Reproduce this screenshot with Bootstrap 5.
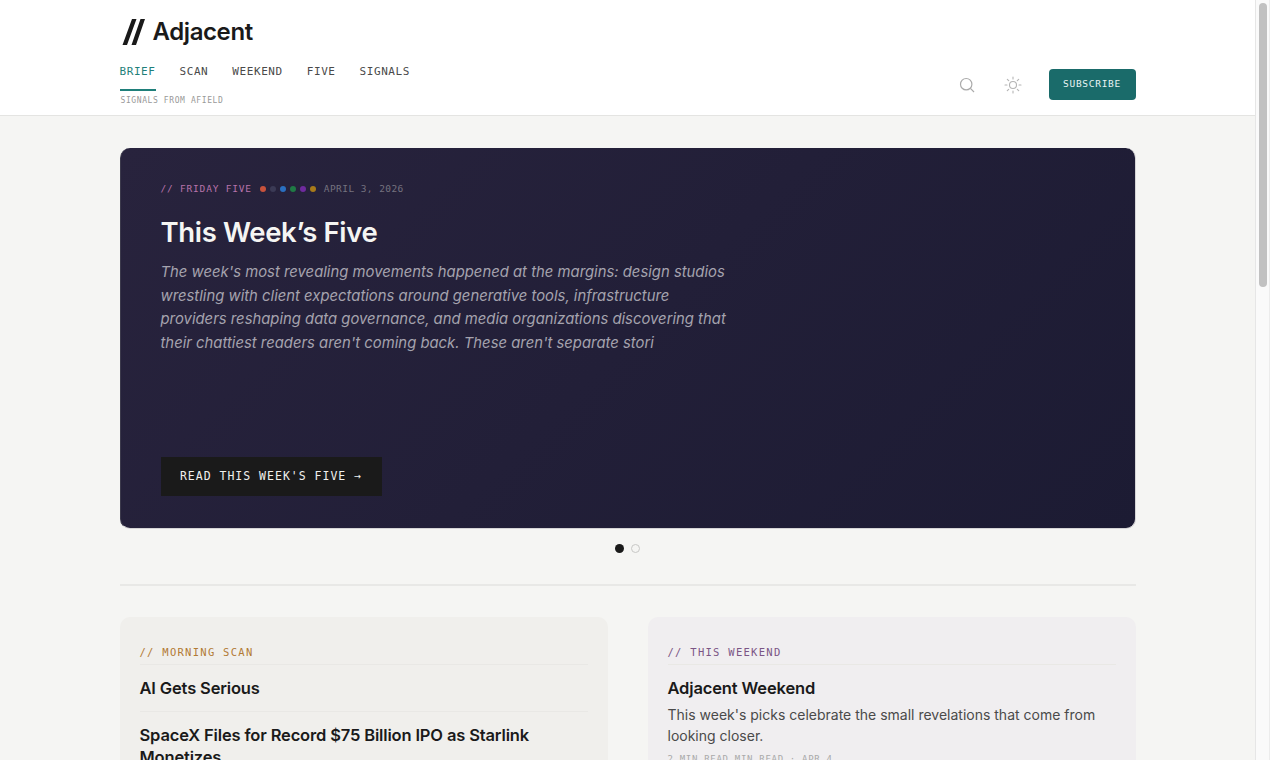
<!DOCTYPE html>
<html lang="en">
<head>
  <meta charset="UTF-8" />
  <meta name="viewport" content="width=device-width, initial-scale=1.0"/>
  <title>Adjacent</title>
  <link href="https://cdn.jsdelivr.net/npm/bootstrap@5.3.2/dist/css/bootstrap.min.css" rel="stylesheet">
  <style>
    body { background: #f5f5f3; color: #1a1a1a; font-family: "Inter", sans-serif; padding-right: 15px; }
    .page-wrap { width: 1016px; margin: 0 auto; }
    .mono { font-family: "DejaVu Sans Mono", monospace; }
    /* the window's scrollbar, as photographed */
    .scroll-track { position: fixed; top: 0; right: 0; bottom: 0; width: 15px; background: #fafafa; border-left: 1px solid #e6e6e6; border-right: 1px solid #ececec; }
    .scroll-thumb { position: absolute; top: 3px; left: 3px; width: 8px; height: 284px; border-radius: 4px; background: #c1c1c1; }
    .site-head { background: #fff; border-bottom: 1px solid #e4e4e2; height: 116px; }
    .head-inner { height: 115px; }
    .brand-row { padding: 19px 2px 0; height: 60px; gap: 7px; }
    .brand-name { font-family: "Inter", sans-serif; font-weight: 600; font-size: 24px; line-height: 26px; letter-spacing: -.4px; color: #1a1a1a; }
    .nav-links { gap: 24px; }
    .nav-links a { font-size: 11px; letter-spacing: .58px; color: #4a4a4a; text-decoration: none; line-height: 14px; height: 31px; padding-top: 5px; display: block; }
    .nav-links a.active { color: #1f7f7a; border-bottom: 2px solid #1f7f7a; }
    .tagline { font-size: 8px; letter-spacing: .6px; color: #999; line-height: 10px; padding: 5px 1px 0; }
    .head-tools { gap: 27px; padding-bottom: 15px; }
    .tool-search { margin: 0 2px 7px 0; }
    .tool-sun { margin-bottom: 6px; }
    .btn-subscribe { background: #1a6b6a; color: #e8f3f2; border: 0; border-radius: 4px; font-size: 9.5px; letter-spacing: .7px; width: 87px; height: 31px; padding: 0; white-space: nowrap; }
    .btn-subscribe:hover { background: #1a6b6a; color: #e8f3f2; }
    .hero-card { margin-top: 32px; height: 381px; border-radius: 10px; border: 1px solid #d5d4d6; border-top: 0; border-left-color: #3c3a4c; background: linear-gradient(135deg, #28233d 0%, #1c1b33 100%); padding: 34px 40px 32px; }
    .hero-meta { font-size: 9.5px; line-height: 14px; gap: 8px; }
    .hero-kicker { color: #b873ab; letter-spacing: .8px; }
    .hero-date { color: #75727f; letter-spacing: .43px; }
    .color-dot { width: 6px; height: 6px; border-radius: 50%; display: block; }
    .hero-title { font-family: "Inter", sans-serif; font-weight: 600; font-size: 27.5px; line-height: 36px; color: #f5f5f3; margin: 18px 0 11px; letter-spacing: -.35px; }
    .hero-text { font-family: "Inter", sans-serif; font-style: italic; font-size: 14.85px; line-height: 23.6px; color: #a5a3ae; width: 570px; margin: 0; }
    .hero-btn { background: #1a1a1a; color: #f0f0ee; border: 0; border-radius: 0; font-size: 11.5px; letter-spacing: 1px; height: 39px; padding: 0; width: 221px; white-space: nowrap; }
    .hero-btn:hover { background: #1a1a1a; color: #f0f0ee; }
    .slide-dots { gap: 7px; height: 39px; }
    .slide-dot { width: 9px; height: 9px; border-radius: 50%; background: #1a1a1a; }
    .slide-dot.off { background: transparent; border: 1px solid #c8c8c6; }
    .rule { height: 2px; background: #e8e8e6; margin: 16px 0 31px; }
    .panel-grid { gap: 40px; }
    .panel { flex: 1 1 0; min-width: 0; border-radius: 10px; padding: 27px 20px 24px; border: 0; }
    .panel-warm { background: #f0efec; }
    .panel-cool { background: #f0eef0; }
    .panel-label { font-size: 10.5px; letter-spacing: 1.28px; line-height: 16px; padding-bottom: 4px; border-bottom: 1px solid #e9e8e5; }
    .label-warm { color: #b27a34; }
    .label-cool { color: #7b5585; }
    .story { padding: 12px 0; border-bottom: 1px solid #e9e8e5; }
    .story:last-child { border-bottom: 0; }
    .story-title { font-family: "Inter", sans-serif; font-weight: 600; font-size: 16.5px; line-height: 22px; color: #1a1a1a; margin: 0; letter-spacing: -.15px; }
    .story-text { font-family: "Inter", sans-serif; font-size: 14px; line-height: 21px; color: #4a4a4a; margin: 5px 0 0; }
    .story-meta { font-size: 9px; letter-spacing: .7px; color: #aaa; margin-top: 7px; }
    .page-end { height: 500px; }
  </style>
</head>
<body>

  <!-- HEADER -->
  <header class="site-head">
    <div class="page-wrap head-inner d-flex justify-content-between">
      <div>
        <div class="brand-row d-flex align-items-start">
          <svg width="24" height="27" viewBox="0 0 24 27" aria-hidden="true"><path d="M10 0h4.500L5 26H.5zM18.500 0H23l-9 26H9.500z" fill="#1a1a1a"/></svg>
          <span class="brand-name">Adjacent</span>
        </div>
        <nav class="nav-links d-flex mono">
          <a class="active" href="#">BRIEF</a>
          <a href="#">SCAN</a>
          <a href="#">WEEKEND</a>
          <a href="#">FIVE</a>
          <a href="#">SIGNALS</a>
        </nav>
        <div class="tagline mono">SIGNALS FROM AFIELD</div>
      </div>
      <div class="head-tools d-flex align-items-end">
        <svg class="tool-search" width="16" height="16" viewBox="0 0 16 16" fill="none" stroke="#aaa" stroke-width="1.200"><circle cx="7.200" cy="7.200" r="5.700"/><path d="M11.400 11.400L15 15"/></svg>
        <svg class="tool-sun" width="18" height="18" viewBox="0 0 18 18" fill="none" stroke="#b4b4b4" stroke-width="1.100" stroke-linecap="round"><circle cx="9" cy="9" r="3.500"/><path d="M9 1v2M9 15v2M1 9h2M15 9h2M3.300 3.300l1.400 1.400M13.300 13.300l1.400 1.400M3.300 14.700l1.400-1.400M13.300 4.700l1.400-1.400"/></svg>
        <button class="btn btn-subscribe mono" type="button">SUBSCRIBE</button>
      </div>
    </div>
  </header>

  <main class="page-wrap">

    <!-- HERO -->
    <section class="hero-card d-flex flex-column align-items-start justify-content-between">
      <div>
        <div class="hero-meta d-flex align-items-center mono">
          <span class="hero-kicker">// FRIDAY FIVE</span>
          <span class="d-flex gap-1">
            <i class="color-dot" style="background:#c8523c"></i>
            <i class="color-dot" style="background:#3b3a55"></i>
            <i class="color-dot" style="background:#2a6fc0"></i>
            <i class="color-dot" style="background:#1f7a45"></i>
            <i class="color-dot" style="background:#6f2a9e"></i>
            <i class="color-dot" style="background:#a87a1a"></i>
          </span>
          <span class="hero-date">APRIL 3, 2026</span>
        </div>
        <h1 class="hero-title">This Week’s Five</h1>
        <p class="hero-text">The week's most revealing movements happened at the margins: design studios wrestling with client expectations around generative tools, infrastructure providers reshaping data governance, and media organizations discovering that their chattiest readers aren't coming back. These aren't separate stori</p>
      </div>
      <button class="btn hero-btn mono" type="button">READ THIS WEEK'S FIVE →</button>
    </section>

    <div class="slide-dots d-flex justify-content-center align-items-center">
      <span class="slide-dot"></span>
      <span class="slide-dot off"></span>
    </div>

    <div class="rule"></div>

    <!-- PANELS -->
    <section class="panel-grid d-flex align-items-start">
      <div class="panel panel-warm">
        <div class="panel-label label-warm mono">// MORNING SCAN</div>
        <div class="story"><h3 class="story-title">AI Gets Serious</h3></div>
        <div class="story"><h3 class="story-title">SpaceX Files for Record $75 Billion IPO as Starlink Monetizes</h3></div>
      </div>
      <div class="panel panel-cool">
        <div class="panel-label label-cool mono">// THIS WEEKEND</div>
        <div class="story">
          <h3 class="story-title">Adjacent Weekend</h3>
          <p class="story-text">This week's picks celebrate the small revelations that come from looking closer.</p>
          <div class="story-meta mono">2 MIN READ MIN READ · APR 4</div>
        </div>
      </div>
    </section>
    <div class="page-end"></div>
  </main>

  <div class="scroll-track"><div class="scroll-thumb"></div></div>

  <script src="https://cdn.jsdelivr.net/npm/bootstrap@5.3.2/dist/js/bootstrap.bundle.min.js"></script>
</body>
</html>
